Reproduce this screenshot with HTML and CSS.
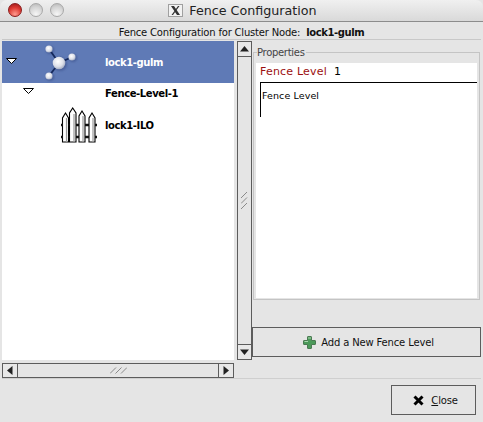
FILE: index.html
```html
<!DOCTYPE html>
<html lang="en">
<head>
<meta charset="utf-8">
<title>Fence Configuration</title>
<link rel="stylesheet" href="styles.css">
</head>
<body>
<div class="window">
  <header class="titlebar">
    <div class="lights">
      <span class="light light-close"></span>
      <span class="light"></span>
      <span class="light"></span>
    </div>
    <div class="title">
      <svg class="x-icon" width="15" height="13" viewBox="0 0 15 13">
        <rect x="0.500" y="0.500" width="14" height="12" fill="#f2f2f2" stroke="#a0a0a0"/>
        <path d="M3 2h3l6 9H9zM10 2h1.500L5 11H3.500z" fill="#333"/>
      </svg>
      <span>Fence Configuration</span>
    </div>
  </header>
  <div class="subhead">Fence Configuration for Cluster Node:&nbsp; <b>lock1-gulm</b></div>
  <div class="main">
    <section class="left">
      <div class="tree">
        <div class="row row-selected">
          <svg class="arrow arrow-root" width="11" height="6" viewBox="0 0 11 6"><path d="M0.500 0.500h10L5.500 5.500z" fill="#fff" stroke="#000"/></svg>
          <svg class="mol" width="40" height="40" viewBox="0 0 40 40">
            <defs>
              <radialGradient id="ball" cx="0.42" cy="0.38" r="0.68">
                <stop offset="0" stop-color="#ffffff"/>
                <stop offset="0.6" stop-color="#dcdfe8"/>
                <stop offset="1" stop-color="#97a2bc"/>
              </radialGradient>
              <filter id="soft" x="-30%" y="-30%" width="160%" height="160%"><feGaussianBlur stdDeviation="1.200"/></filter>
            </defs>
            <g fill="#3f5590" opacity="0.700" filter="url(#soft)">
              <circle cx="9" cy="7" r="4"/><circle cx="32" cy="15" r="4"/><circle cx="9" cy="34" r="4"/><circle cx="19" cy="21" r="7"/>
            </g>
            <path d="M8 6L18 20M31 14L18 20M8 33L18 20" stroke="#14285c" stroke-width="1.800"/>
            <circle cx="8" cy="6" r="3.600" fill="url(#ball)"/>
            <circle cx="31" cy="14" r="3.600" fill="url(#ball)"/>
            <circle cx="8" cy="33" r="3.600" fill="url(#ball)"/>
            <circle cx="18" cy="20" r="6.300" fill="url(#ball)"/>
          </svg>
          <span class="label">lock1-gulm</span>
        </div>
        <div class="row row-level">
          <svg class="arrow arrow-level" width="11" height="6" viewBox="0 0 11 6"><path d="M0.500 0.500h10L5.500 5.500z" fill="#fff" stroke="#000"/></svg>
          <span class="label">Fence-Level-1</span>
        </div>
        <div class="row row-device">
          <svg class="fence" width="40" height="38" viewBox="0 0 40 38">
            <g fill="#fff" stroke="#000" stroke-width="1.100">
              <path d="M2.500 36V12l3-5 3 5v24z"/>
              <path d="M9.500 36V7l3.200-5 3.300 5v29z"/>
              <path d="M19 36V10l3-5 3 5v26z"/>
              <path d="M29 36V12l3-5 3 5v24z"/>
            </g>
            <path d="M6.500 12v24M14 8v28M23 10v26M33 12v24" stroke="#9a9a9a" stroke-width="1.200"/>
            <path d="M1 19h2M8.500 19h1M16 19h3M25 19h4M35 19h2M1 31h2M8.500 31h1M16 31h3M25 31h4M35 31h2" stroke="#111" stroke-width="2.600"/>
          </svg>
          <span class="label label-device">lock1-ILO</span>
        </div>
      </div>
      <div class="hscroll">
        <div class="sbtn sbtn-h"><svg width="6" height="9" viewBox="0 0 6 9"><path d="M5.500 0v9L0 4.500z" fill="#222"/></svg></div>
        <div class="htrack"><svg width="17" height="7" viewBox="0 0 17 7"><path d="M0 6.500L6 .5M5.500 6.500L11.500 .5M11 6.500L17 .5" stroke="#8a8a8a"/></svg></div>
        <div class="sbtn sbtn-h"><svg width="6" height="9" viewBox="0 0 6 9"><path d="M.5 0v9L6 4.500z" fill="#222"/></svg></div>
      </div>
    </section>
    <div class="vscroll">
      <div class="sbtn sbtn-v"><svg width="9" height="6" viewBox="0 0 9 6"><path d="M0 5.500h9L4.500 0z" fill="#222"/></svg></div>
      <div class="vtrack"><svg width="7" height="17" viewBox="0 0 7 17"><path d="M0 6L6 0M0 11.500L6 5.500M0 17L6 11" stroke="#8a8a8a"/></svg></div>
      <div class="sbtn sbtn-v"><svg width="9" height="6" viewBox="0 0 9 6"><path d="M0 .5h9L4.500 6z" fill="#222"/></svg></div>
    </div>
    <section class="right">
      <div class="props">
        <span class="legend">Properties</span>
        <div class="props-body">
          <div class="level-line"><span class="level-key">Fence Level</span><span class="level-val">1</span></div>
          <div class="level-box">Fence Level</div>
        </div>
      </div>
      <button class="btn btn-add">
        <svg width="13" height="13" viewBox="0 0 13 13">
          <path d="M5 .5h3a.5.5 0 0 1 .5.5v3.500H12a.5.5 0 0 1 .5.5v3a.5.5 0 0 1-.5.5H8.500V12a.5.5 0 0 1-.5.5H5a.5.5 0 0 1-.5-.5V8.500H1a.5.5 0 0 1-.5-.5V5a.5.5 0 0 1 .5-.5h3.500V1a.5.5 0 0 1 .5-.5z" fill="#4c9a5a" stroke="#4a7a52"/>
          <path d="M5 1.500h3v1H5zM1.500 5H5v1H1.500z" fill="#a9d8ae"/>
        </svg>
        <span>Add a New Fence Level</span>
      </button>
    </section>
  </div>
  <footer class="footer">
    <button class="btn btn-close">
      <svg width="11" height="11" viewBox="0 0 11 11"><path d="M1.500 1.500l8 8M9.500 1.500l-8 8" stroke="#000" stroke-width="3"/></svg>
      <span><u>C</u>lose</span>
    </button>
  </footer>
</div>
</body>
</html>
```
FILE: styles.css
```css
* { box-sizing: border-box; }
html, body { margin: 0; padding: 0; }
body {
  width: 483px;
  height: 422px;
  overflow: hidden;
  background: #e5e5e5;
  font-family: "DejaVu Sans", sans-serif;
  font-size: 10px;
  color: #000;
}
.window {
  display: flex;
  flex-direction: column;
  width: 483px;
  height: 422px;
  background: #e5e5e5;
}
.titlebar {
  position: relative;
  display: flex;
  align-items: center;
  justify-content: center;
  height: 22px;
  flex: none;
  border-radius: 7px 7px 0 0;
  background: linear-gradient(#f0f0f0, #d9d9d9);
  border-bottom: 1px solid #8c8c8c;
}
.lights {
  position: absolute;
  left: 8px;
  top: 3px;
  display: flex;
  gap: 7px;
}
.light {
  width: 14px;
  height: 14px;
  border-radius: 50%;
  border: 1px solid #a8a8a8;
  background: radial-gradient(circle at 50% 85%, #f6f6f6, #d4d4d4 60%, #b4b4b4);
}
.light-close {
  border-color: #8a1c1c;
  background: radial-gradient(circle at 50% 85%, #ff9a8e, #dd3a32 55%, #991616);
}
.title {
  display: flex;
  align-items: center;
  gap: 6px;
  font-size: 12.700px;
  color: #222;
  padding-left: 2px;
}
.subhead {
  flex: none;
  height: 18px;
  margin: 0 2px;
  padding-top: 4px;
  text-align: center;
  line-height: 13px;
  border-bottom: 1px solid #c8c8c8;
  color: #111;
  font-size: 10px;
  letter-spacing: -0.190px;
}
.subhead b { letter-spacing: -0.400px; }
.main {
  flex: none;
  display: flex;
  height: 338px;
  padding: 1px 2px 0 2px;
}
.left {
  display: flex;
  flex-direction: column;
  width: 232px;
  flex: none;
}
.tree {
  flex: none;
  height: 319px;
  background: #fff;
}
.row {
  position: relative;
  display: flex;
  align-items: center;
  font-weight: bold;
  font-size: 10px;
  letter-spacing: -0.400px;
}
.row .label { position: absolute; left: 103px; }
.row .label-device { margin-top: 2px; }
.row-selected { height: 42px; background: #5f7ab6; color: #fff; }
.row-level { height: 20px; }
.row-device { height: 42px; }
.arrow { position: absolute; }
.arrow-root { left: 4px; top: 17px; }
.arrow-level { left: 21px; top: 5px; }
.mol { position: absolute; left: 39px; top: 2px; }
.fence { position: absolute; left: 58px; top: 3px; }
.hscroll {
  display: flex;
  align-items: stretch;
  height: 15px;
  margin-top: 3px;
  border: 1px solid #5c5c5c;
}
.sbtn {
  display: flex;
  align-items: center;
  justify-content: center;
  background: #e8e8e8;
  flex: none;
}
.sbtn-h { width: 14px; }
.htrack {
  flex: 1;
  display: flex;
  align-items: center;
  justify-content: center;
  background: #e5e5e5;
  border-left: 1px solid #5c5c5c;
  border-right: 1px solid #5c5c5c;
}
.vscroll {
  flex: none;
  display: flex;
  flex-direction: column;
  width: 15px;
  height: 319px;
  margin-left: 3px;
  border: 1px solid #5c5c5c;
}
.sbtn-v { height: 14px; }
.vtrack {
  flex: 1;
  display: flex;
  align-items: center;
  justify-content: center;
  background: #e5e5e5;
  border-top: 1px solid #5c5c5c;
  border-bottom: 1px solid #5c5c5c;
}
.right {
  flex: 1;
  display: flex;
  flex-direction: column;
  min-width: 0;
}
.props {
  position: relative;
  flex: none;
  margin: 11px 1px 0 1px;
  padding: 10px 2px 1px;
  height: 248px;
  border: 1px solid #c4c4c4;
}
.legend {
  position: absolute;
  left: 3px;
  top: -6px;
  padding: 0 1px 0 0;
  background: #e5e5e5;
  font-size: 10px;
  line-height: 12px;
  letter-spacing: -0.300px;
  color: #444;
}
.props-body {
  height: 100%;
  padding: 1px 0 0 4px;
  background: #fff;
}
.level-line {
  display: flex;
  gap: 7px;
  font-size: 11px;
  line-height: 15px;
  letter-spacing: 0.200px;
}
.level-key { color: #9c0f0f; }
.level-box {
  margin-top: 3px;
  height: 35px;
  padding: 7px 0 0 1px;
  border-left: 1px solid #000;
  border-top: 1px solid #000;
  font-size: 9.500px;
  letter-spacing: 0.100px;
  line-height: 11px;
}
.btn {
  display: flex;
  align-items: center;
  justify-content: center;
  font-family: "DejaVu Sans", sans-serif;
  font-size: 10px;
  color: #111;
  background: #e5e5e5;
  border: 1px solid #5c5c5c;
  padding: 0;
  gap: 5px;
}
.btn-add {
  margin-top: 27px;
  height: 30px;
  padding-left: 4px;
  letter-spacing: -0.150px;
}
.footer {
  flex: none;
  display: flex;
  justify-content: flex-end;
  margin: 0 2px;
  padding: 6px 5px 0 0;
  border-top: 1px solid #cfcfcf;
}
.btn-close {
  width: 85px;
  height: 30px;
  gap: 7px;
  padding-left: 4px;
  letter-spacing: -0.200px;
}
```
